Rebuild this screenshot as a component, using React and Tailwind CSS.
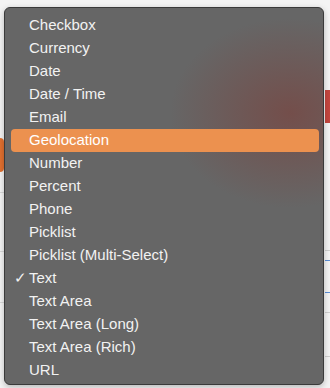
import React from "react";

const items = [
  "Checkbox",
  "Currency",
  "Date",
  "Date / Time",
  "Email",
  "Geolocation",
  "Number",
  "Percent",
  "Phone",
  "Picklist",
  "Picklist (Multi-Select)",
  "Text",
  "Text Area",
  "Text Area (Long)",
  "Text Area (Rich)",
  "URL",
];

function Background() {
  return (
    <div className="w-[330px] h-[388px] flex justify-between bg-[#f4f4f4]">
      <div className="w-[6px] flex flex-col pt-[138px]">
        <div className="w-[4px] h-[34px] bg-[#e2702f] rounded-r-sm" />
        <div className="h-[20px]" />
        <div className="h-px bg-[#d8d8d8]" />
        <div className="h-[58px]" />
        <div className="h-px bg-[#d8d8d8]" />
        <div className="h-[50px]" />
        <div className="h-px bg-[#d8d8d8]" />
      </div>
      <div className="w-[5px] flex flex-col pt-[90px]">
        <div className="h-[33px] bg-[#c4463f]" />
        <div className="h-[127px]" />
        <div className="h-px bg-[#d0d0d0]" />
        <div className="h-[9px]" />
        <div className="h-px bg-[#5b8fd8]" />
        <div className="h-[31px]" />
        <div className="h-px bg-[#5b8fd8]" />
        <div className="h-[19px]" />
        <div className="h-px bg-[#d0d0d0]" />
        <div className="h-[43px]" />
        <div className="h-px bg-[#d0d0d0]" />
      </div>
    </div>
  );
}

export default function App() {
  return (
    <div className="relative w-[330px] h-[388px] overflow-hidden font-['Liberation_Sans','Helvetica',sans-serif]">
      <Background />
      <div className="absolute left-[4px] top-[7px] w-[320px] h-[378px] rounded-[6px] border border-[#3a3a3a] bg-[#666666] bg-[radial-gradient(ellipse_120px_95px_at_285px_105px,rgba(118,74,70,0.85),rgba(102,102,102,0))] shadow-[0_2px_6px_rgba(0,0,0,0.25)] pl-[6px] pr-[4px] pt-[6px] flex flex-col">
        {items.map((label) => {
          const active = label === "Geolocation";
          const checked = label === "Text";
          return (
            <div
              key={label}
              className={
                active
                  ? "relative h-[23px] shrink-0 flex items-center rounded-[4px] bg-[#ec914f] pl-[18px] text-[15px] text-white"
                  : "relative h-[23px] shrink-0 flex items-center pl-[18px] text-[15px] text-[#f2f2f2]"
              }
            >
              {checked && (
                <span className="absolute left-[3px] top-0 h-[23px] flex items-center text-[15px]">✓</span>
              )}
              {label}
            </div>
          );
        })}
      </div>
    </div>
  );
}
